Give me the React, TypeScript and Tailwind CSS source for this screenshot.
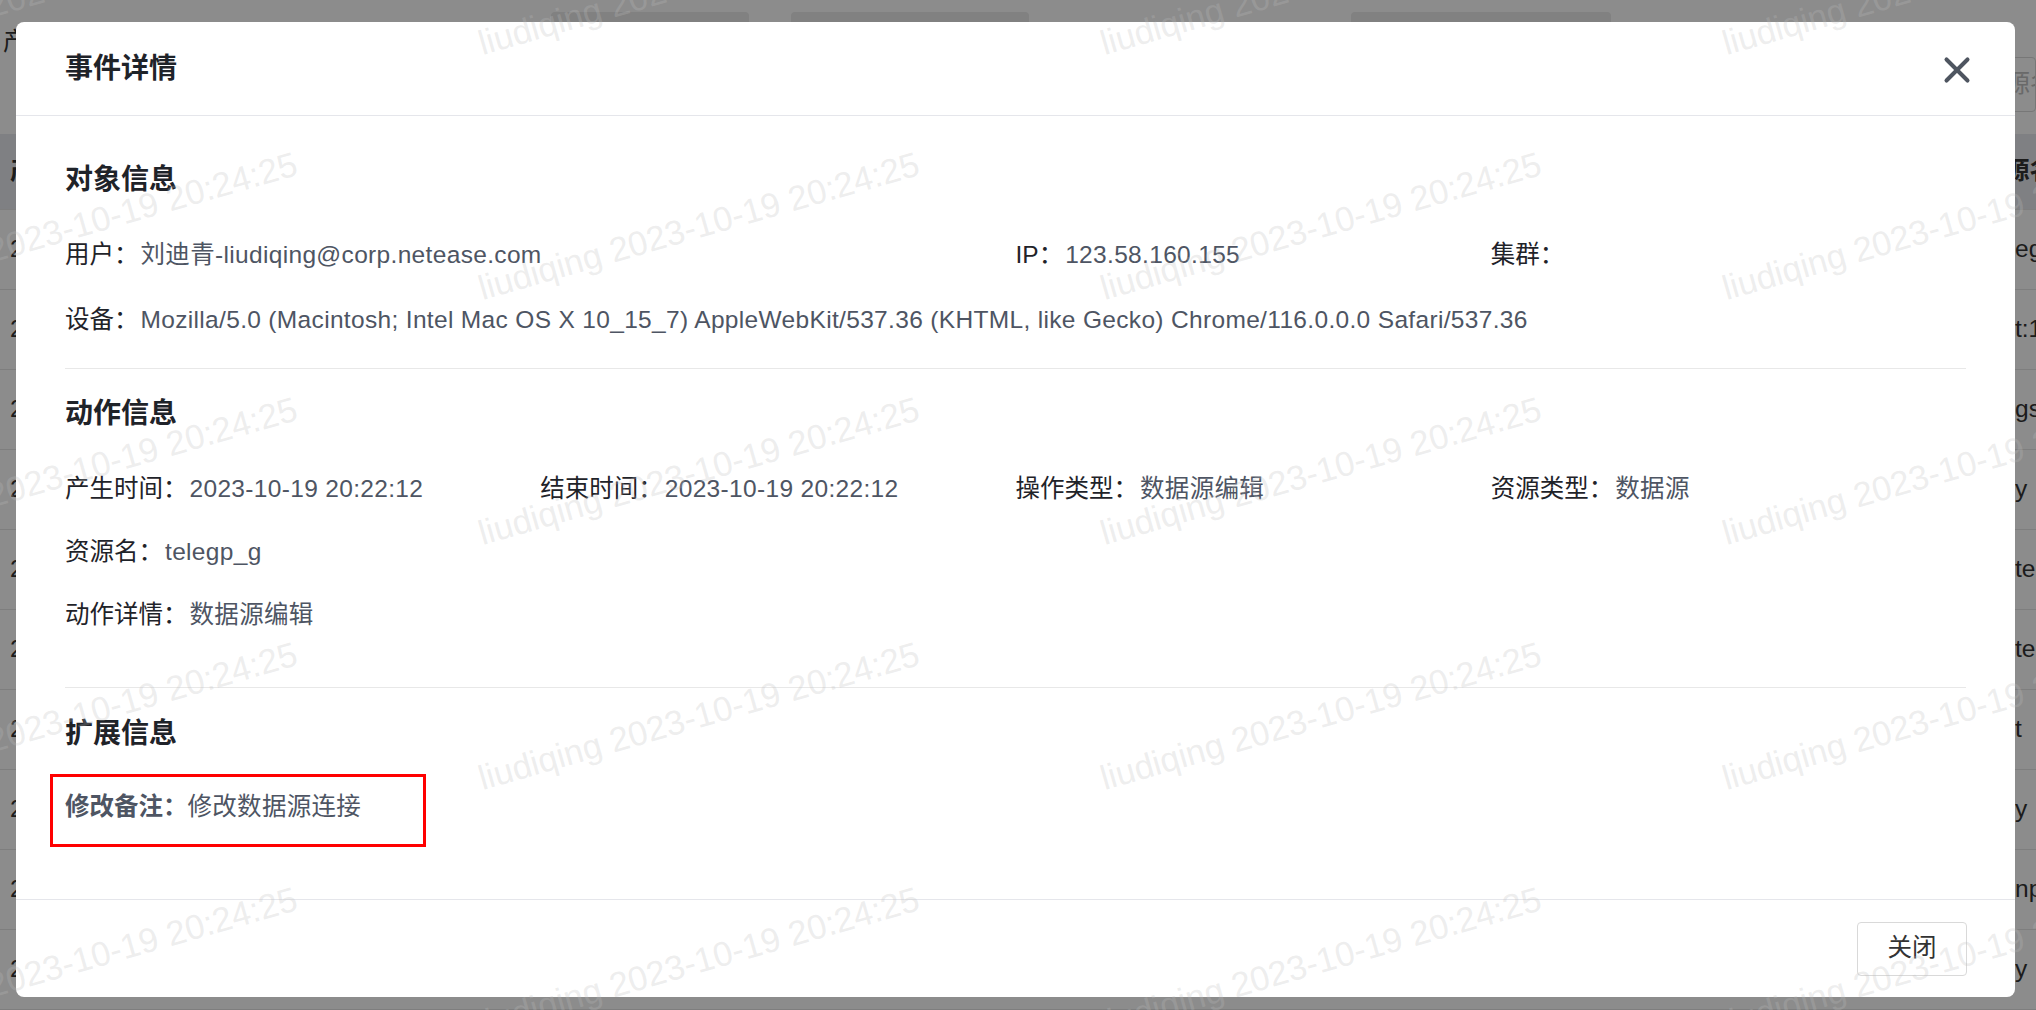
import { X } from "lucide-react";

const WATERMARK = "liudiqing 2023-10-19 20:24:25";

// rows of the table that sits behind the overlay
const BG_ROWS = [
  ["2023-10-19 20:22:12", "egp"],
  ["2023-10-19 20:18:40", "t:12"],
  ["2023-10-19 19:56:03", "gs"],
  ["2023-10-19 19:40:21", "y"],
  ["2023-10-19 19:12:55", "ted"],
  ["2023-10-19 18:47:09", "ted"],
  ["2023-10-19 18:30:44", "t"],
  ["2023-10-19 18:02:17", "y"],
  ["2023-10-19 17:51:38", "np"],
  ["2023-10-19 17:20:06", "y"],
];

export default function App() {
  return (
    <div className="relative h-[1010px] w-[2036px] overflow-hidden bg-white font-['Liberation_Sans','Noto_Sans_CJK_SC',sans-serif] text-[24.5px]">
      <BackgroundPage />

      <div className="absolute inset-0 bg-black/45 pl-[16px] pt-[22px]">
        <EventDetailModal />
      </div>

      <Watermarks />
    </div>
  );
}

function BackgroundPage() {
  return (
    <div className="flex h-full flex-col">
      <div className="flex h-[142px] flex-col">
        <div className="flex items-start">
          <span className="ml-[3px] mt-[24px] text-[#333]">产生时间</span>
          <div className="ml-[450px] mt-[12px] h-[34px] w-[198px] rounded-[4px] bg-[#ebebeb]" />
          <div className="ml-[42px] mt-[12px] h-[34px] w-[238px] rounded-[4px] bg-[#ebebeb]" />
          <div className="ml-[322px] mt-[12px] h-[34px] w-[260px] rounded-[4px] bg-[#ebebeb]" />
        </div>
        <div className="mt-[-4px] flex justify-end">
          <div className="flex h-[55px] w-[60px] items-center overflow-hidden whitespace-nowrap rounded-[4px] border border-[#d9d9d9] pl-[4px] text-[#bfbfbf]">
            资源名称
          </div>
        </div>
      </div>

      <div className="flex h-[80px] items-center justify-between border-b border-[#e6e6e6] bg-[#e8eaee] font-semibold text-[#333]">
        <span className="pl-[10px]">产生时间</span>
        <span className="w-[21px] overflow-hidden whitespace-nowrap">
          <span className="ml-[-10px]">源名称</span>
        </span>
      </div>

      {BG_ROWS.map(([time, tail], i) => (
        <div
          key={i}
          className="flex h-[80px] shrink-0 items-center justify-between border-b border-[#e6e6e6] text-[#333]"
        >
          <span className="pl-[10px]">{time}</span>
          <span className="w-[21px] overflow-hidden whitespace-nowrap">{tail}</span>
        </div>
      ))}
    </div>
  );
}

function EventDetailModal() {
  return (
    <div className="flex h-[975px] w-[1999px] flex-col rounded-[8px] bg-white">
      <div className="flex h-[94px] shrink-0 items-center justify-between border-b border-[#e5e6eb] pl-[49px] pr-[37px]">
        <h2 className="text-[28px] font-semibold leading-[42px] text-[#1f2329]">事件详情</h2>
        <button type="button" className="mt-[3px] text-[#4e5560]" aria-label="关闭">
          <X size={42} strokeWidth={2.3} />
        </button>
      </div>

      <div className="flex-1 px-[49px]">
        <section className="border-b border-[#e8e8e8] pb-[30px] pt-[43px]">
          <SectionTitle>对象信息</SectionTitle>
          <div className="mt-[35px] grid grid-cols-4 gap-y-[28px]">
            <Field className="col-span-2" label="用户" value="刘迪青-liudiqing@corp.netease.com" />
            <Field label="IP" value="123.58.160.155" />
            <Field label="集群" value="" />
            <Field
              className="col-span-4"
              label="设备"
              value="Mozilla/5.0 (Macintosh; Intel Mac OS X 10_15_7) AppleWebKit/537.36 (KHTML, like Gecko) Chrome/116.0.0.0 Safari/537.36"
            />
          </div>
        </section>

        <section className="border-b border-[#e8e8e8] pb-[54px] pt-[24px]">
          <SectionTitle>动作信息</SectionTitle>
          <div className="mt-[35px] grid grid-cols-4 gap-y-[26px]">
            <Field label="产生时间" value="2023-10-19 20:22:12" />
            <Field label="结束时间" value="2023-10-19 20:22:12" />
            <Field label="操作类型" value="数据源编辑" />
            <Field label="资源类型" value="数据源" />
            <Field className="col-span-4" label="资源名" value="telegp_g" />
            <Field className="col-span-4" label="动作详情" value="数据源编辑" />
          </div>
        </section>

        <section className="pt-[25px]">
          <SectionTitle>扩展信息</SectionTitle>
          <div className="relative mt-[33px] leading-[37px] text-[#4e5563]">
            <span className="font-semibold">修改备注：</span>
            <span className="tracking-[0.3px]">修改数据源连接</span>
            {/* highlight box drawn over the note */}
            <div className="pointer-events-none absolute left-[-15px] top-[-14px] h-[73px] w-[376px] border-[3px] border-[#ff0000]" />
          </div>
        </section>
      </div>

      <div className="flex h-[98px] shrink-0 items-center justify-end border-t border-[#e5e6eb] pr-[48px]">
        <button
          type="button"
          className="h-[54px] w-[110px] rounded-[4px] border border-[#d9d9d9] bg-white text-[24.5px] text-[#333]"
        >
          关闭
        </button>
      </div>
    </div>
  );
}

function SectionTitle({ children }: { children: string }) {
  return <h3 className="text-[28px] font-semibold leading-[42px] text-[#1f2329]">{children}</h3>;
}

function Field({
  label,
  value,
  className,
}: {
  label: string;
  value: string;
  className?: string;
}) {
  return (
    <div className={`whitespace-nowrap leading-[37px] ${className ?? ""}`}>
      <span className="text-[#1f2329]">{label}：</span>
      <span className="ml-[2px] tracking-[0.33px] text-[#4e5563]">{value}</span>
    </div>
  );
}

function Watermarks() {
  return (
    <div className="pointer-events-none absolute left-[-138px] top-[-185px] grid grid-cols-[repeat(4,622px)] grid-rows-[repeat(5,245px)]">
      {Array.from({ length: 20 }).map((_, i) => (
        <div key={i} className="flex items-end">
          <span className="origin-bottom-left rotate-[-16deg] whitespace-nowrap text-[34.5px] leading-none text-[rgba(190,190,190,0.27)]">
            {WATERMARK}
          </span>
        </div>
      ))}
    </div>
  );
}
